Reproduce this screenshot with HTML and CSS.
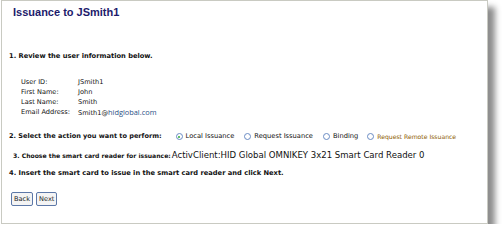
FILE: index.html
```html
<!DOCTYPE html>
<html>
<head>
<meta charset="utf-8">
<link rel="stylesheet" href="styles.css">
</head>
<body>
<div class="panel">
  <h1 class="title">Issuance to JSmith1</h1>
  <p class="step s1">1. Review the user information below.</p>
  <div class="info">
    <div class="row"><span class="lbl">User ID:</span><span>JSmith1</span></div>
    <div class="row"><span class="lbl">First Name:</span><span>John</span></div>
    <div class="row"><span class="lbl">Last Name:</span><span>Smith</span></div>
    <div class="row"><span class="lbl">Email Address:</span><span>Smith1@<span class="dom">hidglobal.com</span></span></div>
  </div>
  <div class="step s2">
    <span class="q">2. Select the action you want to perform:</span>
    <span class="opt"><span class="radio on"></span>Local Issuance</span>
    <span class="opt"><span class="radio"></span>Request Issuance</span>
    <span class="opt"><span class="radio"></span>Binding</span>
    <span class="opt remote"><span class="radio"></span>Request Remote Issuance</span>
  </div>
  <div class="step s3"><span class="q">3. Choose the smart card reader for issuance:</span><span class="reader">ActivClient:HID Global OMNIKEY 3x21 Smart Card Reader 0</span></div>
  <div class="step s4">4. Insert the smart card to issue in the smart card reader and click Next.</div>
  <div class="buttons">
    <button class="btn">Back</button>
    <button class="btn">Next</button>
  </div>
</div>
</body>
</html>
```
FILE: styles.css
```css
html, body {
  margin: 0;
  padding: 0;
  background: #ffffff;
}
body {
  font-family: "DejaVu Sans", Verdana, sans-serif;
  color: #111;
}
.panel {
  box-sizing: border-box;
  margin-left: 1px;
  width: 487px;
  height: 224px;
  border: 1px solid #c9cac2;
  background: #fff;
  box-shadow: 7px 7px 6px rgba(0, 0, 0, 0.45);
  padding: 0 0 0 7px;
}
.title {
  margin: 0;
  padding: 5px 0 0 4px;
  font-family: "Liberation Sans", Arial, sans-serif;
  font-size: 11px;
  font-weight: bold;
  color: #1d1b6b;
  line-height: 13px;
}
.step {
  margin: 0;
  font-size: 6.7px;
  font-weight: bold;
  line-height: 9px;
}
.s1 {
  margin-top: 33px;
}
.info {
  margin: 16px 0 0 12px;
  font-size: 6.6px;
  line-height: 10px;
}
.row {
  display: flex;
}
.lbl {
  width: 57px;
}
.dom {
  font-family: "Open Sans", sans-serif;
  font-size: 7.4px;
  color: #2b4f86;
}
.s2 {
  margin-top: 14px;
  display: flex;
  align-items: center;
}
.s2 > .q {
  font-size: 6.55px;
}
.q {
  font-weight: bold;
}
.opt {
  display: inline-flex;
  align-items: center;
  font-weight: normal;
  font-size: 6.7px;
  margin-left: 10px;
}
.s2 .q + .opt {
  margin-left: 14px;
}
.remote {
  color: #8c5a00;
  font-size: 6.1px;
  margin-left: 9px;
}
.radio {
  box-sizing: border-box;
  width: 7px;
  height: 7px;
  border: 1px solid #6a8cc4;
  border-radius: 50%;
  margin-right: 3px;
  background: #fff;
  position: relative;
}
.radio.on::after {
  content: "";
  position: absolute;
  left: 1.5px;
  top: 1.5px;
  width: 2px;
  height: 2px;
  border-radius: 50%;
  background: #2fae3a;
}
.s3 {
  margin-top: 9px;
  padding-left: 4px;
  line-height: 10px;
  display: flex;
  align-items: baseline;
  gap: 1px;
}
.s3 .q {
  font-size: 6.1px;
}
.reader {
  font-weight: normal;
  font-size: 8.55px;
}
.s4 {
  margin-top: 8px;
}
.buttons {
  margin-top: 14px;
  padding-left: 2px;
  display: flex;
  gap: 3px;
}
.btn {
  font-family: "DejaVu Sans", Verdana, sans-serif;
  font-size: 6.6px;
  color: #222;
  background: #f4f4f4;
  border: 1px solid #5d78a8;
  border-radius: 2px;
  padding: 2px 2px;
  line-height: 8px;
  margin: 0;
}
```
